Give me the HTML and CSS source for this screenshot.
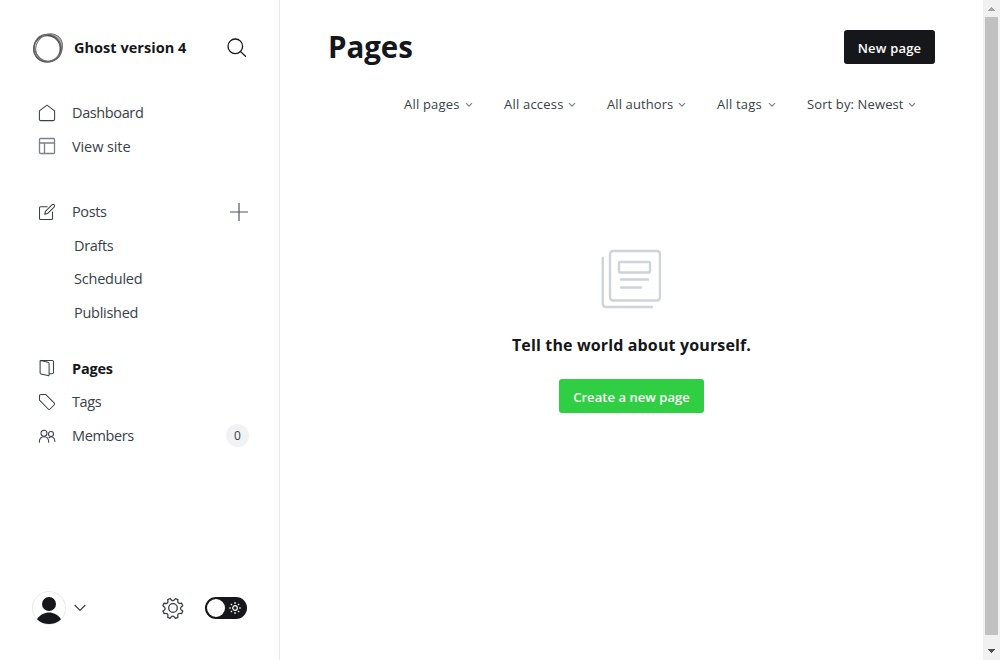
FILE: index.html
```html
<!DOCTYPE html>
<html lang="en">
<head>
<meta charset="utf-8">
<title>Pages - Ghost version 4</title>
<link rel="stylesheet" href="styles.css">
</head>
<body>
<div class="app">
  <aside class="sidebar">
    <header class="brand">
      <svg class="logo" viewBox="0 0 32 32" fill="none">
        <path fill-rule="evenodd" fill="#aaa" d="M14 2.300C23-.5 31 6 30.800 15c0 7-4 12-9 14 4-3 6.500-7 6.500-12C28.300 8.500 22 3.500 14 4z"/>
        <circle cx="15.100" cy="16.700" r="13.300" stroke="#555" stroke-width="1.600"/>
        <ellipse cx="17.100" cy="15.500" rx="14.400" ry="12.600" transform="rotate(-50 17.100 15.500)" stroke="#777" stroke-width="1"/>
        <ellipse cx="16" cy="15.800" rx="14.200" ry="12.800" transform="rotate(50 16 15.800)" stroke="#666" stroke-width="1"/>
      </svg>
      <span class="brand-name">Ghost version 4</span>
      <svg class="search" viewBox="0 0 20 20" fill="none" stroke="#15171a" stroke-width="1.3" stroke-linecap="round"><circle cx="8.300" cy="8.300" r="7.300"/><path d="M13.600 13.600l4.900 4.600"/></svg>
    </header>
    <nav class="nav">
      <div class="group">
        <a class="item"><svg class="icon" viewBox="0 0 18 18"><path d="M1.4 6.9L9 1.2l7.600 5.700V15.300a1.300 1.300 0 0 1-1.300 1.300H2.700a1.300 1.300 0 0 1-1.300-1.300z"/></svg><span>Dashboard</span></a>
        <a class="item"><svg class="icon soft" viewBox="0 0 18 18"><rect x="1.500" y="1.500" width="15" height="15" rx="1"/><path d="M1.500 6h15M6.500 6v10.500"/></svg><span>View site</span></a>
      </div>
      <div class="group">
        <a class="item posts"><svg class="icon" viewBox="0 0 18 18"><path d="M9.200 3.800H2.500a1 1 0 0 0-1 1v10.700a1 1 0 0 0 1 1h11a1 1 0 0 0 1-1V9M6.700 11.300l.7-2.900 6.800-6.700a1.500 1.500 0 0 1 2.100 2.100l-6.800 6.800z"/></svg><span>Posts</span><svg class="plus" viewBox="0 0 18 18"><path d="M9 0v18M0 9h18"/></svg></a>
        <a class="item sub">Drafts</a>
        <a class="item sub scheduled">Scheduled</a>
        <a class="item sub published">Published</a>
      </div>
      <div class="group last">
        <a class="item active"><svg class="icon" viewBox="0 0 18 18"><path d="M2.500 1.400l7.400 1.800a1.500 1.500 0 0 1 1.200 1.500v11a.9.900 0 0 1-1.200.9L3 14.900a1.200 1.200 0 0 1-.9-1.200V1.900a.5.500 0 0 1 .5-.5H14.200a1.300 1.300 0 0 1 1.300 1.300v10.800a1.300 1.300 0 0 1-1.300 1.300h-3"/></svg><span>Pages</span></a>
        <a class="item tags"><svg class="icon" viewBox="0 0 18 18"><path d="M1.500 2.700A1.300 1.300 0 0 1 2.800 1.400H7.600L16.100 9.900a1.500 1.500 0 0 1 0 2.100L12.100 16a1.300 1.300 0 0 1-1.900 0L1.500 7.200z"/></svg><span>Tags</span></a>
        <a class="item"><svg class="icon" viewBox="0 0 18 18"><circle cx="6" cy="6.300" r="3"/><circle cx="13" cy="7" r="2.500"/><path d="M1.300 15.300c0-3.600 2-5.500 4.700-5.500s4.700 1.900 4.700 5.500M10.900 10.800c3-2.300 6-.1 6 3.600"/></svg><span>Members</span><span class="badge">0</span></a>
      </div>
    </nav>
    <footer class="user-bar">
      <svg class="avatar" viewBox="0 0 34 34"><circle cx="17" cy="17" r="16.500" fill="#fff" stroke="#e9eaec"/><circle cx="17" cy="13" r="7" fill="#15171a"/><path d="M5 28.200C11 19.300 23 19.300 29 28.200 22 34.700 12 34.700 5 28.200z" fill="#15171a"/></svg>
      <svg class="user-arrow" viewBox="0 0 12 8"><path d="M.7 1L6 6.500 11.300 1"/></svg>
      <svg class="gear" viewBox="0 0 24 24"><path transform="translate(0 -.2) rotate(22.500 12 12.200)" d="M13.300 2.500l.5 1.700a2 2 0 0 0 2.800 1.200l1.600-.9 1.900 1.900-.9 1.600a2 2 0 0 0 1.200 2.800l1.800.5v2.700l-1.800.5a2 2 0 0 0-1.200 2.800l.9 1.600-1.900 1.900-1.600-.9a2 2 0 0 0-2.800 1.200l-.5 1.700h-2.600l-.5-1.700a2 2 0 0 0-2.800-1.200l-1.600.9-1.900-1.900.9-1.600a2 2 0 0 0-1.200-2.800l-1.800-.5v-2.700l1.800-.5a2 2 0 0 0 1.200-2.800l-.9-1.600 1.900-1.900 1.600.9a2 2 0 0 0 2.800-1.200l.5-1.700z"/><circle cx="12" cy="12" r="4.300"/></svg>
      <span class="toggle"><span class="knob"></span><svg class="sun" viewBox="0 0 12 12"><circle cx="6" cy="6" r="2.300"/><path d="M6 0v2M6 10v2M0 6h2M10 6h2M1.800 1.800l1.300 1.300M8.900 8.900l1.300 1.300M10.200 1.800L8.900 3.100M3.100 8.900l-1.300 1.300"/></svg></span>
    </footer>
  </aside>
  <main class="main">
    <header class="top"><h1>Pages</h1><a class="btn dark">New page</a></header>
    <div class="filters">
      <span class="filter f1"><span>All pages</span><svg viewBox="0 0 8 6"><path d="M1 1.200l3 3 3-3"/></svg></span>
      <span class="filter f2"><span>All access</span><svg viewBox="0 0 8 6"><path d="M1 1.200l3 3 3-3"/></svg></span>
      <span class="filter f3"><span>All authors</span><svg viewBox="0 0 8 6"><path d="M1 1.200l3 3 3-3"/></svg></span>
      <span class="filter f4"><span>All tags</span><svg viewBox="0 0 8 6"><path d="M1 1.200l3 3 3-3"/></svg></span>
      <span class="filter f5"><span>Sort by: Newest</span><svg viewBox="0 0 8 6"><path d="M1 1.200l3 3 3-3"/></svg></span>
    </div>
    <section class="empty">
      <svg class="paper" viewBox="0 0 60 60"><rect x="9" y="2" width="50" height="49.500" rx="3"/><rect x="18" y="13" width="31" height="10.500" rx="1"/><path d="M20 30.500h27M20 38.500h20M1.800 9v46a3 3 0 0 0 3 3H51"/></svg>
      <h2>Tell the world about yourself.</h2>
      <a class="btn green">Create a new page</a>
    </section>
  </main>
  <div class="scrollbar">
    <svg class="sb-arrow up" viewBox="0 0 7 4" shape-rendering="crispEdges"><path d="M3 0h1v1h1v1h1v1h1v1H0V3h1V2h1V1h1z"/></svg>
    <div class="thumb"></div>
    <svg class="sb-arrow down" viewBox="0 0 7 4" shape-rendering="crispEdges"><path d="M0 0h7v1H6v1H5v1H4v1H3V3H2V2H1V1H0z"/></svg>
  </div>
</div>
</body>
</html>
```
FILE: styles.css
```css
* { box-sizing: border-box; }
body { margin: 0; font-family: "Open Sans", "Noto Sans", sans-serif; color: #15171a; background: #fff; }
svg { display: block; flex: none; fill: none; }
h1, h2 { margin: 0; }
.app { display: flex; width: 1000px; height: 660px; overflow: hidden; }
.sidebar { width: 280px; border-right: 1px solid #e5e7ea; display: flex; flex-direction: column; flex: none; }
.brand { display: flex; align-items: center; height: 96px; padding: 0 32px; }
.logo { width: 32px; height: 32px; }
.brand-name { margin-left: 10px; padding-bottom: 2px; font-size: 14.5px; font-weight: 700; letter-spacing: 0.03px; white-space: nowrap; }
.search { width: 20px; height: 20px; margin-left: auto; }
.nav { display: flex; flex-direction: column; gap: 32px; padding: 0 31px 0 38px; }
.group { display: flex; flex-direction: column; }
.group.last { margin-top: -10px; }
.item { display: flex; align-items: center; height: 33.6px; font-size: 14.5px; letter-spacing: -0.38px; color: #394047; white-space: nowrap; }
.item:nth-child(2) { letter-spacing: -0.1px; }
.item.sub { padding-left: 36px; letter-spacing: -0.34px; }
.item.scheduled { padding-bottom: 1px; letter-spacing: -0.22px; }
.item.published { letter-spacing: -0.28px; }
.item.tags { letter-spacing: -0.4px; }
.item.active { color: #15171a; font-weight: 700; letter-spacing: -0.2px; }
.icon { width: 18px; height: 18px; margin-right: 16px; stroke: #394047; stroke-width: 1.05; stroke-linejoin: round; stroke-linecap: round; }
.icon.soft { stroke: #7c8187; stroke-width: 1.3; }
.plus { width: 18px; height: 18px; margin-left: auto; stroke: #50565d; stroke-width: 1.2; }
.badge { margin-left: auto; margin-right: -1px; width: 23px; height: 23px; border-radius: 50%; background: #f1f2f4; font-size: 12px; font-weight: 500; letter-spacing: 0; line-height: 24px; text-align: center; }
.user-bar { display: flex; align-items: center; height: 34px; margin-top: auto; margin-bottom: 35px; padding: 0 32px; }
.avatar { width: 34px; height: 34px; }
.user-arrow { width: 12px; height: 8px; margin-left: 8px; stroke: #394047; stroke-width: 1.2; }
.gear { width: 24px; height: 24px; margin-left: 75px; stroke: #394047; stroke-width: 1.3; stroke-linejoin: round; }
.toggle { display: flex; align-items: center; justify-content: space-between; width: 42px; height: 22px; margin-left: 20px; padding: 0 6px 0 2px; border-radius: 11px; background: #15171a; }
.knob { width: 18px; height: 18px; border-radius: 50%; background: #fff; }
.sun { width: 12px; height: 12px; stroke: #fff; stroke-width: 1.2; }
.main { flex: 1; display: flex; flex-direction: column; padding: 30px 48px 0; }
.top { display: flex; justify-content: space-between; height: 34px; align-items: center; }
h1 { font-size: 29.5px; font-weight: 700; line-height: 34px; letter-spacing: -0.05px; }
.btn { display: flex; align-items: center; justify-content: center; height: 34px; border-radius: 3px; color: #fff; font-size: 13px; font-weight: 600; white-space: nowrap; padding-top: 2px; }
.dark { width: 91px; background: #15171a; letter-spacing: 0.2px; }
.green { width: 145px; background: #30cf43; letter-spacing: 0.05px; }
.filters { display: flex; justify-content: flex-end; height: 20px; margin-top: 30px; padding-right: 19px; gap: 31px; }
.filter { display: flex; align-items: center; justify-content: space-between; font-size: 13px; letter-spacing: 0.2px; color: #394047; white-space: nowrap; }
.filter svg { width: 8px; height: 6px; margin-top: 2px; stroke: #7c8288; stroke-width: 1.2; }
.f1 { width: 69px; }
.f2 { width: 72px; }
.f3 { width: 79px; letter-spacing: 0.1px; }
.f4 { width: 59px; }
.f5 { width: 109px; letter-spacing: 0.12px; }
.empty { display: flex; flex-direction: column; align-items: center; margin-top: 135px; }
.paper { width: 60px; height: 60px; margin-right: 2px; stroke: #ced4d9; stroke-width: 2.4; stroke-linecap: round; }
h2 { margin: 24px 0 22px; font-size: 16px; line-height: 24px; font-weight: 700; letter-spacing: 0.14px; white-space: nowrap; }
.scrollbar { width: 17px; background: #f1f1f1; display: flex; flex-direction: column; align-items: center; flex: none; }
.thumb { width: 13px; height: 618px; background: #c1c1c1; }
.sb-arrow { width: 7px; height: 4px; }
.up { margin: 7px 0 6px; fill: #a3a3a3; }
.down { margin-top: 14px; fill: #505050; }
```
